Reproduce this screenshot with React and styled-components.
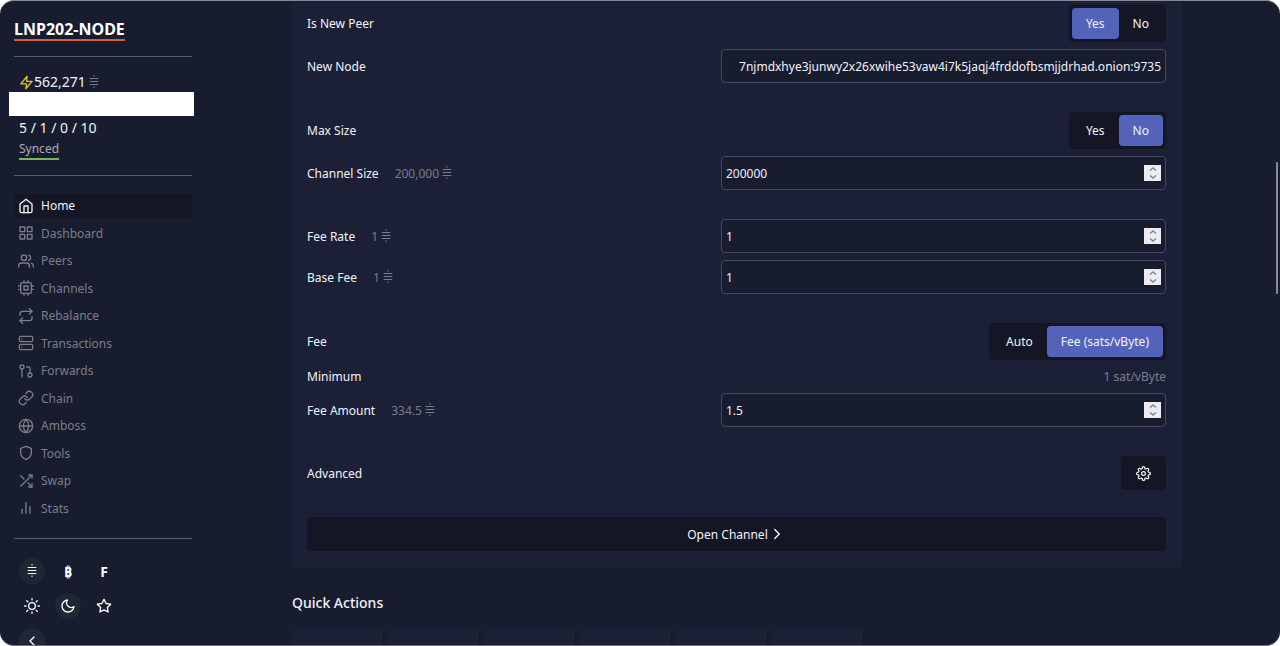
import React, { useState } from 'react'
import styled, { createGlobalStyle, css } from 'styled-components'
import {
  FiBarChart2,
  FiChevronLeft,
  FiChevronRight,
  FiCpu,
  FiGitPullRequest,
  FiGlobe,
  FiGrid,
  FiHome,
  FiLink,
  FiMoon,
  FiRepeat,
  FiServer,
  FiSettings,
  FiShield,
  FiShuffle,
  FiStar,
  FiSun,
  FiUsers,
  FiZap,
} from 'react-icons/fi'

const colors = {
  background: '#181c2f',
  card: '#1b2036',
  cardBorder: '#1f233a',
  separator: '#1d2239',
  dark: '#151625',
  primary: '#5263b9',
  border: '#46495b',
  line: '#5a5c6b',
  text: '#f2f3f7',
  muted: '#7b7d87',
}

const links = [
  { name: 'Home', Icon: FiHome },
  { name: 'Dashboard', Icon: FiGrid },
  { name: 'Peers', Icon: FiUsers },
  { name: 'Channels', Icon: FiCpu },
  { name: 'Rebalance', Icon: FiRepeat },
  { name: 'Transactions', Icon: FiServer },
  { name: 'Forwards', Icon: FiGitPullRequest },
  { name: 'Chain', Icon: FiLink },
  { name: 'Amboss', Icon: FiGlobe },
  { name: 'Tools', Icon: FiShield },
  { name: 'Swap', Icon: FiShuffle },
  { name: 'Stats', Icon: FiBarChart2 },
]

const actions = ['a', 'b', 'c', 'd', 'e', 'f']

function SatIcon() {
  return (
    <SatSvg viewBox="0 0 10 14" aria-hidden="true">
      <path d="M5 0v1.5M5 11.5V13M.7 3.5h8.6M.7 6.5h8.6M.7 9.5h8.6" />
    </SatSvg>
  )
}

function Amount({ children }) {
  return (
    <AmountText>
      {children}
      <SatIcon />
    </AmountText>
  )
}

function Toggle({ label, options, initial }) {
  const [active, setActive] = useState(initial)

  return (
    <ToggleGroup role="group" aria-label={label}>
      {options.map((option) => (
        <ToggleButton
          key={option}
          type="button"
          $active={option === active}
          aria-pressed={option === active}
          onClick={() => setActive(option)}
        >
          {option}
        </ToggleButton>
      ))}
    </ToggleGroup>
  )
}

function NumberRow({ id, label, amount, initial, step = 1 }) {
  const [value, setValue] = useState(initial)

  const change = (diff) => setValue(String(Number(value) + diff))

  return (
    <Row>
      <Label htmlFor={id}>
        {label}
        <Amount>{amount}</Amount>
      </Label>
      <Field>
        <Input
          id={id}
          type="number"
          step={step}
          value={value}
          onChange={(e) => setValue(e.target.value)}
        />
        <Stepper>
          <StepButton type="button" aria-label={`Increase ${label}`} onClick={() => change(step)}>
            <svg viewBox="0 0 8 4" width="8" height="4">
              <path d="M1 3.5 4 1l3 2.5" />
            </svg>
          </StepButton>
          <StepButton type="button" aria-label={`Decrease ${label}`} onClick={() => change(-step)}>
            <svg viewBox="0 0 8 4" width="8" height="4">
              <path d="M1 .5 4 3 7 .5" />
            </svg>
          </StepButton>
        </Stepper>
      </Field>
    </Row>
  )
}

function Sidebar() {
  return (
    <Side>
      <Alias href="#">LNP202-NODE</Alias>
      <Balance>
        <FiZap />
        562,271
        <SatIcon />
      </Balance>
      <Blank />
      <Stats>5 / 1 / 0 / 10</Stats>
      <Synced>Synced</Synced>
      <Nav>
        {links.map(({ name, Icon }) => (
          <NavLink key={name} href="#" $active={name === 'Home'}>
            <Icon />
            {name}
          </NavLink>
        ))}
      </Nav>
      <Options>
        <RoundButton type="button" aria-label="Satoshis" $active>
          <SatIcon />
        </RoundButton>
        <RoundButton type="button">₿</RoundButton>
        <RoundButton type="button">F</RoundButton>
        <RoundButton type="button" aria-label="Light theme">
          <FiSun />
        </RoundButton>
        <RoundButton type="button" aria-label="Dark theme" $active>
          <FiMoon />
        </RoundButton>
        <RoundButton type="button" aria-label="Night theme">
          <FiStar />
        </RoundButton>
        <RoundButton type="button" aria-label="Collapse menu" $active>
          <FiChevronLeft />
        </RoundButton>
      </Options>
    </Side>
  )
}

function OpenChannel() {
  const [node, setNode] = useState(
    '7njmdxhye3junwy2x26xwihe53vaw4i7k5jaqj4frddofbsmjjdrhad.onion:9735'
  )

  return (
    <Card>
      <Section>
        <Row>
          <Label as="span">Is New Peer</Label>
          <Toggle label="Is New Peer" options={['Yes', 'No']} initial="Yes" />
        </Row>
        <Row>
          <Label htmlFor="node">New Node</Label>
          <Field>
            <Input
              id="node"
              type="text"
              $align="right"
              value={node}
              onChange={(e) => setNode(e.target.value)}
            />
          </Field>
        </Row>
      </Section>
      <Section>
        <Row>
          <Label as="span">Max Size</Label>
          <Toggle label="Max Size" options={['Yes', 'No']} initial="No" />
        </Row>
        <NumberRow id="size" label="Channel Size" amount="200,000" initial="200000" />
      </Section>
      <Section>
        <NumberRow id="rate" label="Fee Rate" amount="1" initial="1" />
        <NumberRow id="base" label="Base Fee" amount="1" initial="1" />
      </Section>
      <Section>
        <Row>
          <Label as="span">Fee</Label>
          <Toggle label="Fee" options={['Auto', 'Fee (sats/vByte)']} initial="Fee (sats/vByte)" />
        </Row>
        <Row>
          <Label as="span">Minimum</Label>
          <Muted>1 sat/vByte</Muted>
        </Row>
        <NumberRow id="fee" label="Fee Amount" amount="334.5" initial="1.5" step={0.5} />
      </Section>
      <Section>
        <Row>
          <Label as="span">Advanced</Label>
          <SettingsButton type="button" aria-label="Advanced settings">
            <FiSettings />
          </SettingsButton>
        </Row>
      </Section>
      <SubmitButton type="submit">
        Open Channel
        <FiChevronRight />
      </SubmitButton>
    </Card>
  )
}

function App() {
  return (
    <>
      <GlobalStyle />
      <Window>
        <Sidebar />
        <Main>
          <Content>
            <OpenChannel />
            <Title>Quick Actions</Title>
            <Actions>
              {actions.map((action) => (
                <ActionCard key={action} />
              ))}
            </Actions>
          </Content>
        </Main>
        <ScrollThumb />
      </Window>
    </>
  )
}

export default App

const GlobalStyle = createGlobalStyle`
  * {
    box-sizing: border-box;
  }

  body {
    margin: 0;
    background: #fff;
    color: ${colors.text};
    font-family: 'Noto Sans', sans-serif;
    font-size: 12px;
    line-height: 19px;
  }

  button,
  input {
    color: inherit;
    font: inherit;
  }

  button {
    cursor: pointer;
  }
`

const Window = styled.div`
  position: relative;
  display: flex;
  height: 100vh;
  overflow: hidden;
  background: ${colors.background};
  border-top: 1px solid #85888f;
  border-bottom: 1px solid #6c6e7c;
  border-radius: 14px;
`

const Side = styled.aside`
  flex: 0 0 194px;
  display: flex;
  flex-direction: column;
  align-items: flex-start;
  padding: 18px 2px 0 14px;

  > * {
    flex-shrink: 0;
  }
`

const Alias = styled.a`
  margin-bottom: 15px;
  border-bottom: 2px solid #d2622a;
  color: #fff;
  font-size: 16px;
  font-weight: 700;
  line-height: 20px;
  text-decoration: none;
`

const SatSvg = styled.svg`
  width: 10px;
  height: 14px;
  fill: none;
  stroke: currentColor;
  stroke-width: 1;
`

const Balance = styled.div`
  align-self: stretch;
  display: flex;
  align-items: center;
  padding: 15px 0 0 5px;
  border-top: 1px solid ${colors.line};
  font-size: 14px;
  line-height: 20px;

  > svg:first-child {
    width: 15px;
    height: 15px;
    color: #e8c31f;
  }

  ${SatSvg} {
    margin-left: 3px;
    color: ${colors.muted};
  }
`

const Blank = styled.div`
  align-self: stretch;
  height: 24px;
  margin: 0 -2px 0 -5px;
  background: #fff;
`

const Stats = styled.div`
  padding: 2px 5px 1px;
  font-size: 14px;
  line-height: 20px;
`

const Synced = styled.div`
  margin: 0 0 15px 5px;
  border-bottom: 2px solid #73b95c;
  color: #a9abb5;
`

const Nav = styled.nav`
  align-self: stretch;
  display: grid;
  grid-auto-rows: 1fr;
  align-items: center;
  min-height: 364px;
  padding: 16px 0;
  border: solid ${colors.line};
  border-width: 1px 0;
`

const NavLink = styled.a`
  display: flex;
  align-items: center;
  gap: 7px;
  height: 24px;
  padding: 0 4px;
  border-radius: 4px;
  background: ${({ $active }) => ($active ? colors.dark : 'transparent')};
  color: ${({ $active }) => ($active ? colors.text : colors.muted)};
  text-decoration: none;

  svg {
    width: 16px;
    height: 16px;
  }
`

const Options = styled.div`
  display: grid;
  grid-template-columns: repeat(3, 26px);
  gap: 9px 10px;
  padding: 19px 5px;
`

const RoundButton = styled.button`
  display: flex;
  align-items: center;
  justify-content: center;
  height: 26px;
  padding: 0;
  border: none;
  border-radius: 50%;
  background: ${({ $active }) => ($active ? '#1e2733' : 'transparent')};
  color: #fff;
  font-size: 14px;
  font-weight: 700;

  svg {
    width: 16px;
    height: 16px;
  }

  ${SatSvg} {
    width: 10px;
    height: 14px;
  }
`

const Main = styled.main`
  flex: 1;
  display: flex;
  justify-content: center;
  min-width: 0;
`

const Content = styled.div`
  flex: 0 1 890px;
  min-width: 0;
`

const Card = styled.form`
  padding: 4px 15px 15px 14px;
  background: ${colors.card};
  border: solid ${colors.cardBorder};
  border-width: 0 1px 1px;
  border-radius: 0 0 4px 4px;
`

const Section = styled.section`
  display: flex;
  flex-direction: column;
  gap: 7px;
  padding-bottom: 14px;

  & + & {
    padding-top: 14px;
    border-top: 1px solid ${colors.separator};
  }
`

const Row = styled.div`
  display: flex;
  align-items: center;
  justify-content: space-between;
`

const Label = styled.label`
  display: flex;
  align-items: center;
  white-space: nowrap;
`

const AmountText = styled.span`
  display: flex;
  align-items: center;
  gap: 3px;
  margin-left: 16px;
  color: ${colors.muted};
`

const Muted = styled.span`
  color: ${colors.muted};
`

const ToggleGroup = styled.div`
  display: flex;
  padding: 3px;
  background: ${colors.dark};
  border-radius: 4px;
`

const ToggleButton = styled.button`
  height: 31px;
  padding: 0 14px;
  border: none;
  border-radius: 4px;
  background: ${({ $active }) => ($active ? colors.primary : 'transparent')};
`

const Field = styled.div`
  position: relative;
  flex: 0 1 445px;
`

const Input = styled.input`
  display: block;
  width: 100%;
  height: 34px;
  padding: 0 4px;
  background: ${colors.background};
  border: 1px solid ${colors.border};
  border-radius: 4px;
  outline: none;
  text-align: ${({ $align }) => $align || 'left'};
  appearance: textfield;

  &::-webkit-inner-spin-button {
    appearance: none;
    margin: 0;
  }
`

const Stepper = styled.div`
  position: absolute;
  top: 9px;
  right: 5px;
  display: flex;
  flex-direction: column;
  width: 17px;
  height: 16px;
  background: #ecebf1;
`

const StepButton = styled.button`
  flex: 1;
  display: flex;
  align-items: center;
  justify-content: center;
  padding: 0;
  border: none;
  background: none;

  path {
    fill: none;
    stroke: #85858a;
    stroke-width: 1.4;
  }
`

const darkButton = css`
  display: flex;
  align-items: center;
  justify-content: center;
  height: 34px;
  border: none;
  border-radius: 4px;
  background: ${colors.dark};
`

const SettingsButton = styled.button`
  ${darkButton}
  padding: 0 15px;

  svg {
    width: 15px;
    height: 15px;
  }
`

const SubmitButton = styled.button`
  ${darkButton}
  width: 100%;
  margin-top: 13px;

  svg {
    width: 18px;
    height: 18px;
  }
`

const Title = styled.h2`
  margin: 26px 0 16px;
  font-size: 14px;
  font-weight: 500;
  line-height: 20px;
`

const Actions = styled.div`
  display: flex;
  gap: 6px;
`

const ActionCard = styled.div`
  flex: 0 1 90px;
  height: 90px;
  background: ${colors.card};
  border: 1px solid ${colors.cardBorder};
  border-radius: 4px;
`

const ScrollThumb = styled.div`
  position: absolute;
  top: 25%;
  right: 2px;
  width: 2px;
  height: 132px;
  border-radius: 1px;
  background: #8a8c95;
`
